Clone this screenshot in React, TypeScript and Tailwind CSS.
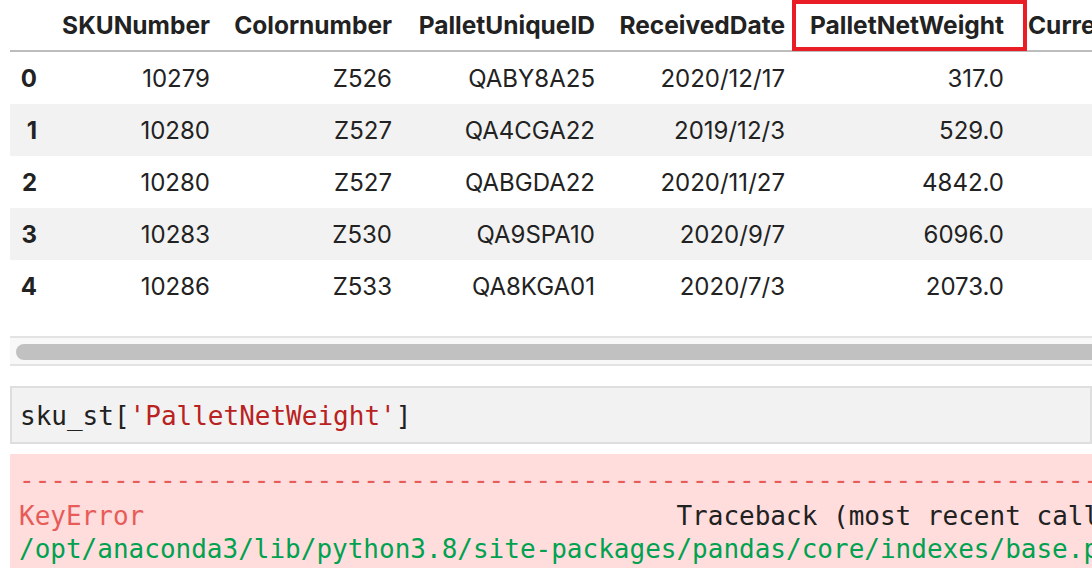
import React from "react";

const rows = [
  ["0", "10279", "Z526", "QABY8A25", "2020/12/17", "317.0"],
  ["1", "10280", "Z527", "QA4CGA22", "2019/12/3", "529.0"],
  ["2", "10280", "Z527", "QABGDA22", "2020/11/27", "4842.0"],
  ["3", "10283", "Z530", "QA9SPA10", "2020/9/7", "6096.0"],
  ["4", "10286", "Z533", "QA8KGA01", "2020/7/3", "2073.0"],
];

const headers = ["", "SKUNumber", "Colornumber", "PalletUniqueID", "ReceivedDate", "PalletNetWeight"];
const widths = ["w-[39px]", "w-[173px]", "w-[182px]", "w-[203px]", "w-[190px]", "w-[219px]"];

const mono = { fontFamily: '"DejaVu Sans Mono", monospace' };
const sans = { fontFamily: 'Inter, "Liberation Sans", sans-serif' };

export default function App() {
  return (
    <div className="w-[1092px] h-[568px] overflow-hidden bg-white pl-[10px]">
      <div className="relative w-[1300px] text-[#222]" style={sans}>
        <div className="flex h-[52px] border-b-2 border-[#bdbdbd] text-[24.5px] font-bold">
          {headers.map((h, i) => (
            <div key={i} className={`${widths[i]} shrink-0 px-[12px] flex items-center justify-end whitespace-nowrap`}>
              {h}
            </div>
          ))}
          <div className="px-[12px] flex items-center whitespace-nowrap">CurrentWeight</div>
        </div>
        {rows.map((r, ri) => (
          <div key={ri} className={`flex h-[52px] pt-[2px] text-[24px] ${ri % 2 === 1 ? "bg-[#f2f2f2]" : "bg-white"}`}>
            {r.map((c, ci) => (
              <div
                key={ci}
                className={`${widths[ci]} shrink-0 px-[12px] flex items-center justify-end whitespace-nowrap ${ci === 0 ? "font-bold" : ""}`}
              >
                {c}
              </div>
            ))}
          </div>
        ))}
        <div className="absolute left-[782px] top-0 w-[235px] h-[51px] border-4 border-[#e81d25]"></div>
      </div>

      <div className="mt-[24px] h-[30px] border-y-2 border-[#e3e3e3] bg-[#f8f8f8] pl-[6px] pt-[6px]">
        <div className="h-[16px] w-[1200px] rounded-full bg-[#c1c1c1]"></div>
      </div>

      <div
        className="mt-[20px] h-[58px] border-2 border-[#dedede] bg-[#f2f2f2] pl-[8px] pt-[12px] text-[26px] leading-[33px] text-[#212121] whitespace-pre"
        style={mono}
      >
        sku_st[<span className="text-[#ba2121]">'PalletNetWeight'</span>]
      </div>

      <div
        className="mt-[10px] h-[200px] bg-[#fdd] pl-[9px] pt-[10px] text-[26px] leading-[33px] whitespace-pre"
        style={mono}
      >
        <div className="h-[36px] text-[#e75c58]">
          {"---------------------------------------------------------------------------"}
        </div>
        <div className="text-[#212121]">
          <span className="text-[#e75c58]">KeyError</span>
          {"                                  Traceback (most recent call last)"}
        </div>
        <div className="text-[#00a250]">
          /opt/anaconda3/lib/python3.8/site-packages/pandas/core/indexes/base.py
        </div>
      </div>
    </div>
  );
}
